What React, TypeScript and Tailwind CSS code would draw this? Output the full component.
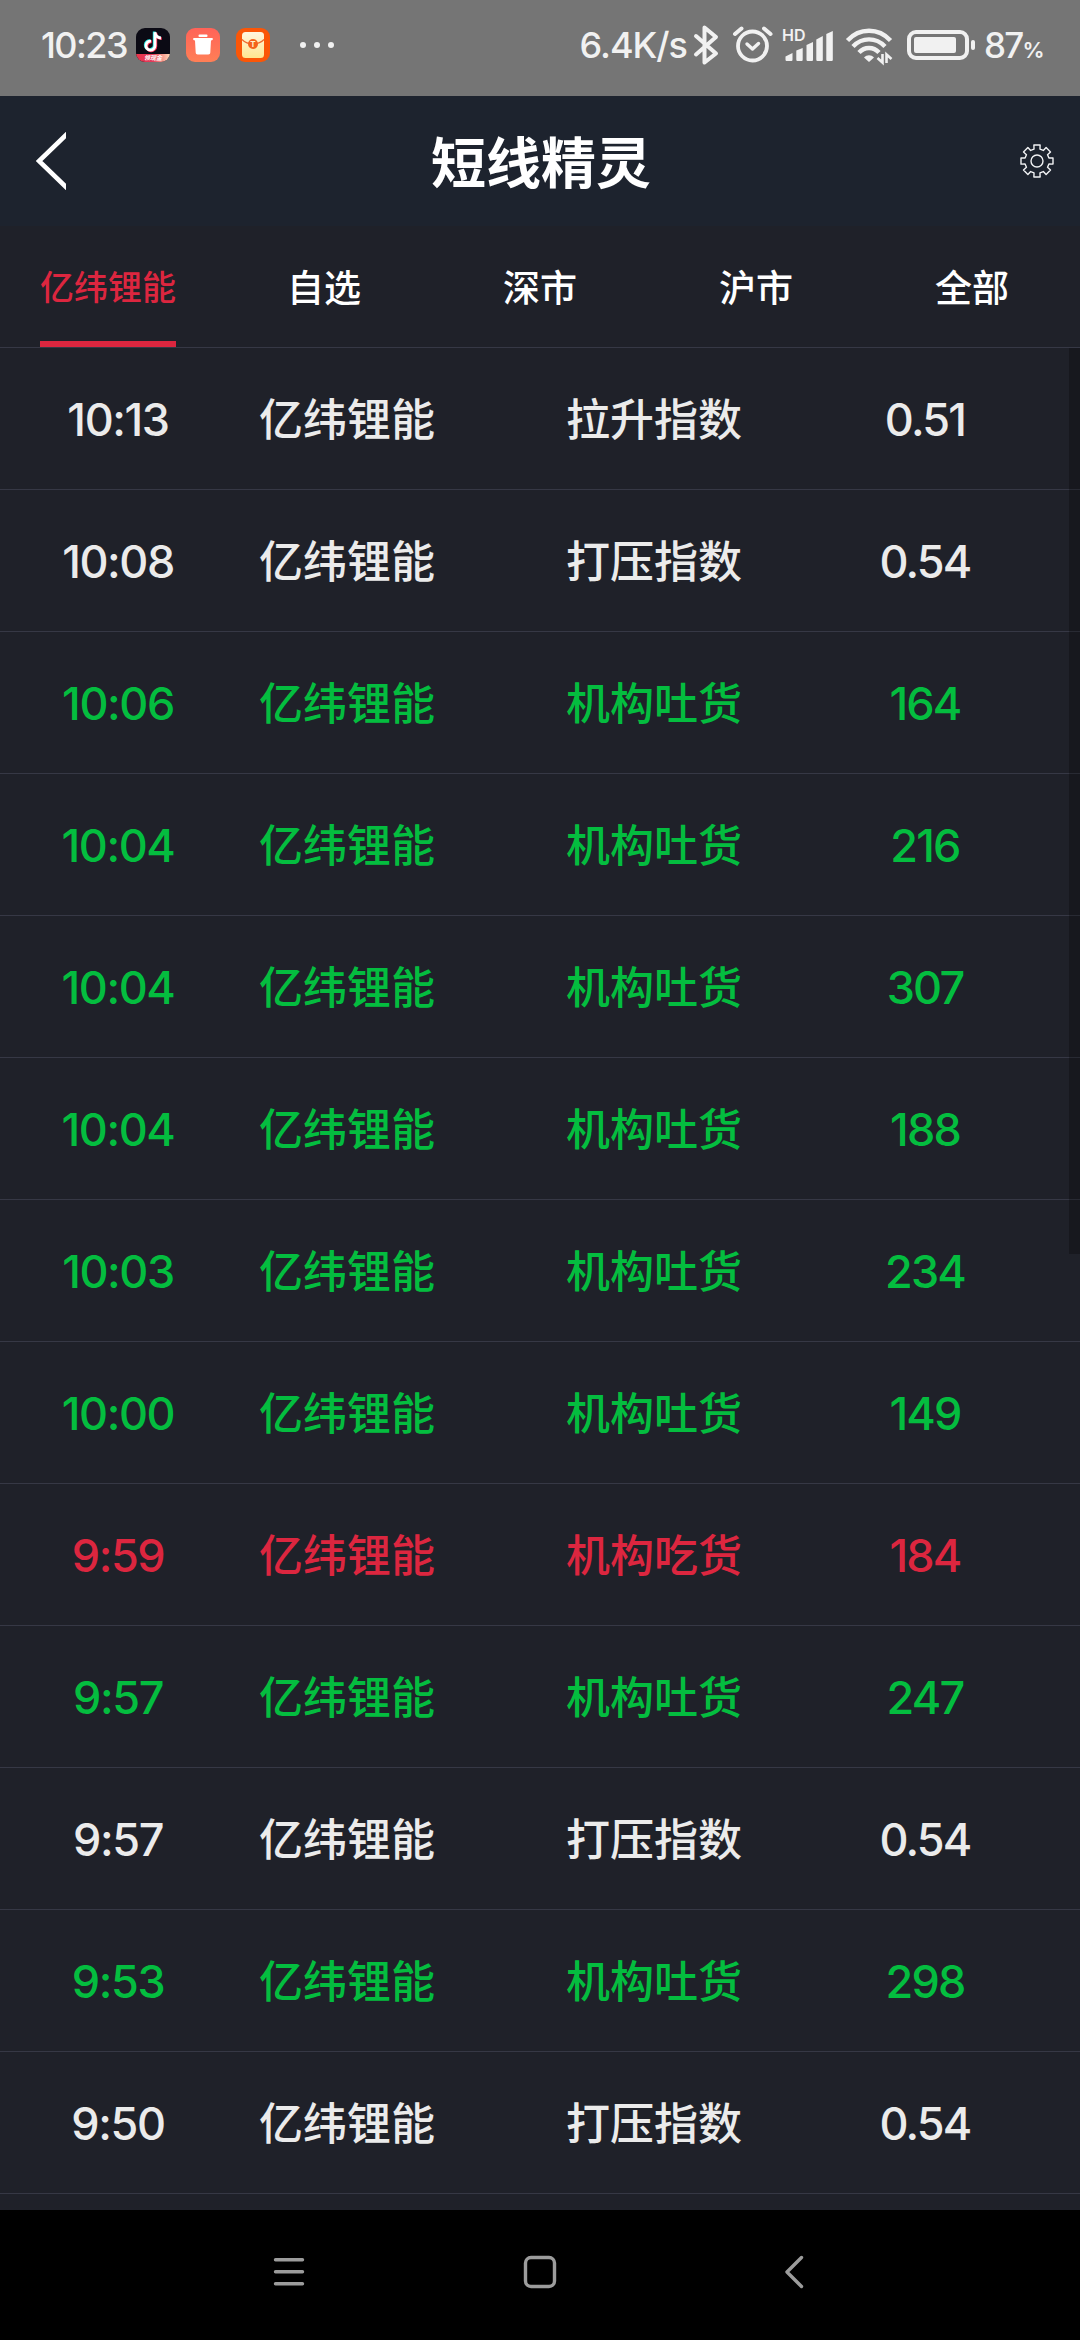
import type { ReactNode } from 'react';

type Tone = 'white' | 'green' | 'red';

const toneClass: Record<Tone, string> = {
  white: 'text-[#ebebeb]',
  green: 'text-[#04bd3f]',
  red: 'text-[#dc263f]',
};

const stock = '亿纬锂能';
const tabs = ['亿纬锂能', '自选', '深市', '沪市', '全部'];

const rows: { time: string; event: string; value: string; tone: Tone }[] = [
  { time: '10:13', event: '拉升指数', value: '0.51', tone: 'white' },
  { time: '10:08', event: '打压指数', value: '0.54', tone: 'white' },
  { time: '10:06', event: '机构吐货', value: '164', tone: 'green' },
  { time: '10:04', event: '机构吐货', value: '216', tone: 'green' },
  { time: '10:04', event: '机构吐货', value: '307', tone: 'green' },
  { time: '10:04', event: '机构吐货', value: '188', tone: 'green' },
  { time: '10:03', event: '机构吐货', value: '234', tone: 'green' },
  { time: '10:00', event: '机构吐货', value: '149', tone: 'green' },
  { time: '9:59', event: '机构吃货', value: '184', tone: 'red' },
  { time: '9:57', event: '机构吐货', value: '247', tone: 'green' },
  { time: '9:57', event: '打压指数', value: '0.54', tone: 'white' },
  { time: '9:53', event: '机构吐货', value: '298', tone: 'green' },
  { time: '9:50', event: '打压指数', value: '0.54', tone: 'white' },
];

function NotificationIcons() {
  return (
    <div className="ml-2 flex items-center gap-4">
      {/* TikTok */}
      <div className="relative h-[34px] w-[34px] overflow-hidden rounded-[9px] bg-[#0b0a14]">
        <svg className="absolute inset-0" width="34" height="34" viewBox="0 0 34 34" fill="none" strokeWidth="2.8">
          <g stroke="#25e8e4" transform="translate(-.8 -.6)">
            <path d="M15 13.200a4.500 4.500 0 1 0 4 4.600V4.200c.4 3.600 2.800 5.600 6 5.800" />
          </g>
          <g stroke="#fb2f53" transform="translate(.8 .6)">
            <path d="M15 13.200a4.500 4.500 0 1 0 4 4.600V4.200c.4 3.600 2.800 5.600 6 5.800" />
          </g>
          <path stroke="#fff" d="M15 13.200a4.500 4.500 0 1 0 4 4.600V4.200c.4 3.600 2.800 5.600 6 5.800" />
        </svg>
        <div className="absolute inset-x-0 bottom-0 flex h-[8px] items-center justify-center bg-linear-to-r from-[#e9344a] via-[#e03a5a] to-[#ffd9b8]">
          <span className="font-['Noto_Sans_CJK_SC',sans-serif] text-[6px] leading-none font-bold text-white italic">领现金</span>
        </div>
      </div>
      {/* Cleaner */}
      <svg width="34" height="34" viewBox="0 0 34 34">
        <defs>
          <linearGradient id="cleaner" x1="0" y1="0" x2="0" y2="1">
            <stop offset="0" stopColor="#ff6358" />
            <stop offset="1" stopColor="#ff7f56" />
          </linearGradient>
        </defs>
        <rect width="34" height="34" rx="9" fill="url(#cleaner)" />
        <rect x="12.5" y="6.5" width="9" height="2.6" rx="1" fill="#fff" />
        <path d="M8 10h18c1.2 0 1.2 2 0 2.2l-1 .2-.7 12c0 1.2-.8 2-2 2H11.7c-1.2 0-2-.8-2-2l-.7-12-1-.2c-1.2-.2-1.2-2.2 0-2.2Z" fill="#fff" />
      </svg>
      {/* Red packet */}
      <div className="relative flex h-[34px] w-[34px] items-center justify-center rounded-[9px] bg-[#fb5607]">
        <svg className="absolute inset-0" width="34" height="34" viewBox="0 0 34 34">
          <defs>
            <linearGradient id="packet" x1="0" y1="0" x2="0" y2="1">
              <stop offset="0" stopColor="#fff6df" />
              <stop offset="1" stopColor="#ffe690" />
            </linearGradient>
          </defs>
          <rect x="6" y="4" width="22" height="26" rx="3.5" fill="url(#packet)" />
          <path d="M6 11.5c3 3 7 4.5 11 4.5s8-1.5 11-4.5" stroke="#f0682c" strokeWidth="1.2" fill="none" />
          <circle cx="17" cy="16" r="5" fill="#f4621c" />
        </svg>
        <span className="relative -top-px text-[8px] leading-none font-bold text-[#fff0cc]">T</span>
      </div>
    </div>
  );
}

function StatusIcons() {
  return (
    <svg width="284" height="90" viewBox="692 0 284 90" fill="none" stroke="#f1f1f1">
      {/* Bluetooth */}
      <path d="m696 36 20 17.5-11.500 9V27.500L716 37l-20 17.500" strokeWidth="4" strokeLinejoin="round" strokeLinecap="round" />
      {/* Alarm */}
      <circle cx="752.5" cy="46" r="14.5" strokeWidth="3.8" />
      <path d="m747 44 5.5 5 6-5.5" strokeWidth="3.4" strokeLinecap="round" strokeLinejoin="round" />
      <path d="m735 34 6.5-5.5M770.5 34l-6.500-5.500" strokeWidth="4" strokeLinecap="round" />
      {/* Signal */}
      <g fill="#f1f1f1" stroke="none">
        <path d="M785.5 56.5 792.5 53v6.5c0 1-.5 1.5-1.5 1.5h-4c-1 0-1.5-.5-1.5-1.5Z" />
        <path d="M796.3 50.5 802.7 48v11.5c0 1-.5 1.5-1.5 1.5h-3.4c-1 0-1.5-.5-1.5-1.5Z" />
        <path d="M806.5 45 813 42v17.5c0 1-.5 1.5-1.5 1.5H808c-1 0-1.5-.5-1.5-1.5Z" />
        <path d="M816.3 39.5 822.8 36v23.5c0 1-.5 1.5-1.5 1.5h-3.5c-1 0-1.5-.5-1.5-1.5Z" />
        <path d="M826.3 34 832.8 31v28.5c0 1-.5 1.5-1.5 1.5h-3.5c-1 0-1.5-.5-1.5-1.5Z" />
      </g>
      {/* Wifi */}
      <g strokeWidth="4.4">
        <path d="M847.5 40.5c12-13 31-13 43 0" />
        <path d="M853 46.500c9-9.500 23-9.500 32 0" />
        <path d="M859 52.500c5.500-6 14.500-6 20 0" />
      </g>
      <path d="M864 57.500c3-3 7-3 10 0L869 62Z" fill="#f1f1f1" stroke="none" />
      <path d="M882.5 54v8.500l-5-4.500M886.500 63v-8.500l5 4.500" strokeWidth="2.6" />
      {/* Battery */}
      <rect x="909" y="32" width="58" height="26" rx="7" strokeWidth="4" />
      <rect x="914" y="37" width="42" height="16" rx="2" fill="#f1f1f1" stroke="none" />
      <rect x="971" y="40" width="4" height="10" rx="2" fill="#f1f1f1" stroke="none" />
    </svg>
  );
}

function StatusBar() {
  return (
    <div className="flex h-24 items-center bg-[#757575] pb-1.5 font-[Inter,sans-serif] font-medium text-[#f1f1f1]">
      <span className="ml-[41px] w-[87px] text-[36px] leading-none tracking-[-1.6px]">10:23</span>
      <NotificationIcons />
      <div className="ml-[30px] flex gap-2">
        <span className="h-1.5 w-1.5 rounded-full bg-[#f1f1f1]" />
        <span className="h-1.5 w-1.5 rounded-full bg-[#f1f1f1]" />
        <span className="h-1.5 w-1.5 rounded-full bg-[#f1f1f1]" />
      </div>
      <span className="ml-auto text-[36px] leading-none tracking-[-1px]">6.4K/s</span>
      <div className="relative ml-[5px] mr-2">
        <StatusIcons />
        <span className="absolute top-[27px] left-[90px] text-[16px] leading-none font-semibold">HD</span>
      </div>
      <div className="mr-[39px] flex w-[57px] items-baseline leading-none">
        <span className="text-[35px] tracking-[-1.8px]">87</span>
        <span className="text-[22px] font-semibold tracking-[-1px]">%</span>
      </div>
    </div>
  );
}

function GearIcon() {
  const teeth = [0, 45, 90, 135, 180, 225, 270, 315];
  const point = (r: number, deg: number) => {
    const a = (deg * Math.PI) / 180;
    return `${(17 + r * Math.sin(a)).toFixed(2)} ${(17 - r * Math.cos(a)).toFixed(2)}`;
  };
  const d = teeth
    .map((t, i) => `${i ? 'L' : 'M'}${point(12.3, t - 14)}L${point(16.3, t - 11)}L${point(16.3, t + 11)}L${point(12.3, t + 14)}`)
    .join('');
  return (
    <svg width="34" height="34" viewBox="0 0 34 34" fill="none" stroke="#f1f2f4" strokeWidth="1.4" strokeLinejoin="round">
      <path d={`${d}Z`} />
      <circle cx="17" cy="17" r="6" />
    </svg>
  );
}

function Header() {
  return (
    <header className="flex h-[130px] items-center justify-between bg-[#1d232e] pr-[26px] pl-9">
      <svg width="30" height="58" viewBox="0 0 30 58" fill="none">
        <path d="M32 1 3 29l29 28" stroke="#fff" strokeWidth="4.6" />
      </svg>
      <h1 className="-mt-1 pr-1 text-[55px] leading-none font-bold text-white">短线精灵</h1>
      <GearIcon />
    </header>
  );
}

function Tab({ active, children }: { active?: boolean; children: ReactNode }) {
  return (
    <div className="flex justify-center">
      {active ? (
        <span className="flex h-full items-center border-b-[6px] border-[#dc263f] pt-1 text-[34px] font-medium text-[#dc263f]">
          {children}
        </span>
      ) : (
        <span className="flex h-full items-center text-[37px] font-medium text-white">{children}</span>
      )}
    </div>
  );
}

export default function App() {
  return (
    <div className="flex h-[2340px] w-[1080px] flex-col overflow-hidden bg-[#1f2129] font-['Noto_Sans_CJK_SC',sans-serif]">
      <StatusBar />
      <Header />

      <nav className="grid h-[122px] grid-cols-5 border-b border-[#363845]">
        {tabs.map((tab, i) => (
          <Tab key={tab} active={i === 0}>
            {tab}
          </Tab>
        ))}
      </nav>

      <main className="relative flex-1 overflow-hidden">
        {rows.map((row, i) => (
          <div
            key={i}
            className={`grid h-[142px] grid-cols-[236px_222px_392px_150px] items-center border-b border-[#363845] text-center text-[44px] leading-none font-medium ${toneClass[row.tone]}`}
          >
            <span className="pt-px font-[Inter,sans-serif] text-[45px] tracking-[-1.4px]">{row.time}</span>
            <span className="pb-[3px]">{stock}</span>
            <span className="pb-[3px]">{row.event}</span>
            <span className="pt-px font-[Inter,sans-serif] text-[45px] tracking-[-1.8px]">{row.value}</span>
          </div>
        ))}
        {/* Scroll thumb */}
        <div className="absolute top-0 right-0 h-[906px] w-[11px] bg-black/25" />
      </main>

      {/* Navigation bar */}
      <footer className="h-[130px] bg-black">
        <svg width="1080" height="130" fill="none" stroke="#9c9c9c" strokeWidth="3.4" strokeLinecap="round" strokeLinejoin="round">
          <path d="M275.500 49.700h27M275.500 61.700h27M275.500 73.700h27" />
          <rect x="525.5" y="47.5" width="29" height="29" rx="5.5" />
          <path d="M801.500 47.500 787 62l14.500 14.500" />
        </svg>
      </footer>
    </div>
  );
}
